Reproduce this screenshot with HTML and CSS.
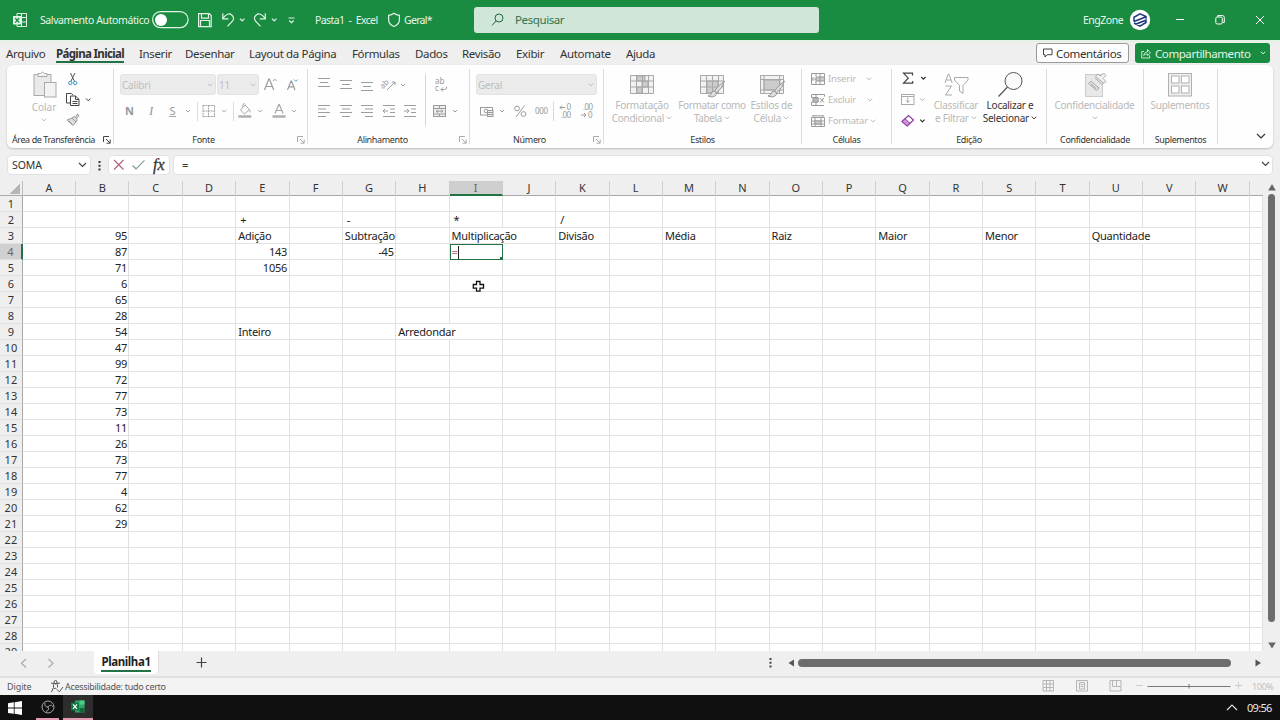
FILE: index.html
```html
<!DOCTYPE html>
<html lang="pt-BR">
<head>
<meta charset="utf-8">
<title>Pasta1 - Excel</title>
<link rel="stylesheet" href="styles.css">
</head>
<body>
<svg class="defs" width="0" height="0">
  <symbol id="chev" viewBox="0 0 6 4" overflow="visible"><path d="M.8 .7 3 2.9 5.2 .7" fill="none" stroke="currentColor" stroke-width="1"/></symbol>
  <symbol id="launch" viewBox="0 0 8 8"><path d="M.5 6V.5H6M3 3l4 4M7.2 3.5v3.7H3.5" fill="none" stroke="currentColor"/></symbol>
</svg>

<header class="titlebar">
  <svg class="app-icon" width="16" height="16" viewBox="12 12 16 16"><path d="M17 13.500h9.500v13h-9.500zM17 17.500h9.500M17 22h9.500M21.500 13.500v13" fill="none" stroke="#e4f3e8"/><rect x="13" y="16" width="8.500" height="8.500" fill="#e4f3e8"/><path d="m15.200 18 4 4.600m0-4.600-4 4.600" stroke="#188c40" stroke-width="1.300"/></svg>
  <span class="autosave">Salvamento Automático</span>
  <svg width="150" height="40" viewBox="150 0 150 40" fill="none" stroke="#e4f3e8" stroke-width="1.200">
    <rect x="152.600" y="11.600" width="35.500" height="16" rx="8"/><circle cx="161" cy="20" r="6" fill="#fff" stroke="none"/>
    <path d="M198.600 13.600h10.600l2 2v11h-12.600zM201.500 13.600v4.500h7v-4.500M200.500 27v-6.500h9V27"/>
    <path d="M222.800 13.200v5.600h5.600M223 18.400c3-4.600 6.500-5.500 9-3.200s1.700 4.800-.5 7l-4 4.200"/>
    <path d="m240 18.600 2.200 2.200 2.200-2.200M272 18.600l2.200 2.200 2.200-2.200M288.500 18h6M289.300 20.500l2.200 2.200 2.200-2.200"/>
    <path d="M265.300 13.200v5.600h-5.600M265 18.400c-3-4.600-6.500-5.500-9-3.200s-1.700 4.800.5 7l4 4.200"/>
  </svg>
  <span class="doc">Pasta1&nbsp; -&nbsp; Excel</span>
  <svg width="16" height="18" viewBox="386 11 16 18"><path d="M394 13.300c-2 1.500-3.600 1.800-5.400 2v4.200c0 3.500 2 5.700 5.400 7 3.400-1.300 5.400-3.500 5.400-7v-4.200c-1.800-.2-3.400-.5-5.400-2z" fill="none" stroke="#e4f3e8" stroke-width="1.200"/></svg>
  <span class="sens">Geral*</span>
  <div class="search"><svg width="14" height="14" viewBox="0 0 14 14"><circle cx="8" cy="5" r="4" fill="none" stroke="#1f6a3b"/><path d="M5 8 1 12.500" stroke="#1f6a3b"/></svg><span>Pesquisar</span></div>
  <span class="user">EngZone</span>
  <svg width="22" height="22" viewBox="1129 9 22 22"><circle cx="1140" cy="20" r="10.200" fill="#fff"/><path d="M1146 18.800v-2.300l-6-2.700-6 3.500v4.200M1134 21.500l11.500-4.500M1134 23l6 3.200 6-3.700v-2.300l-10.500 4" fill="none" stroke="#20387a" stroke-width="1.500"/></svg>
  <svg class="winbtns" width="100" height="20" viewBox="1170 10 100 20" fill="none" stroke="#fff"><path d="M1176 19.500h8"/><rect x="1215.800" y="17" width="6.500" height="7" rx="1.500"/><path d="M1217.800 17v-1.500h4.500q2 0 2 2v5h-1.500M1256 16l8 8m0-8-8 8"/></svg>
</header>

<nav class="tabs">
  <span>Arquivo</span><span class="active"><b>Página Inicial</b></span><span>Inserir</span><span>Desenhar</span><span>Layout da Página</span><span>Fórmulas</span><span>Dados</span><span>Revisão</span><span>Exibir</span><span>Automate</span><span>Ajuda</span>
  <div class="comments"><svg width="10" height="10" viewBox="0 0 10 10"><path d="M.5 1h8.500v5.700H4.200L2 9V6.700H.5z" fill="none" stroke="#444"/></svg>Comentários</div>
  <div class="share"><svg width="10" height="11" viewBox="0 0 10 11"><path d="M3 3.500H.7v6.500h8V7.500M2.700 7.500c.4-2.500 1.800-3.500 3.800-3.500V1.500L9.500 5 6.500 7.700V6C5 6 3.800 6.300 2.700 7.500z" fill="none" stroke="#d9efdf" stroke-width=".9"/></svg><span>Compartilhamento</span><svg class="sc" width="6" height="4"><use href="#chev"/></svg></div>
</nav>

<section class="ribbon">
  <div class="group g-clip">
    <div class="body">
      <div class="big off paste"><svg width="26" height="28" viewBox="32 71 26 28"><rect x="35" y="74.500" width="17" height="21" fill="#e9e9e9" stroke="#aaa"/><path d="M39 76.500v-3h2.500q2-3 4 0H48v3z" fill="#f4f4f4" stroke="#aaa"/><rect x="45.500" y="82.500" width="11.500" height="14.500" fill="#f3f3f3" stroke="#aaa"/></svg><span>Colar</span><svg width="6" height="4"><use href="#chev"/></svg></div>
      <svg width="32" height="66" viewBox="62 65 32 66" fill="none">
        <path d="M70.500 73l4 8.500M75 73l-4.200 8.500" stroke="#555"/><circle cx="70.300" cy="83" r="1.700" stroke="#3b94bd"/><circle cx="75.200" cy="83" r="1.700" stroke="#3b94bd"/>
        <path d="M70.500 103h-4V93.500h5l1.500 1.500M70.500 96h5l3.500 3.300v6.200h-8.500zM75.500 96v3.500H79M72.500 101.500h5M72.500 103.500h5" stroke="#444"/>
        <path d="m86 98.500 2.200 2.200 2.200-2.200" stroke="#333"/>
        <path d="m67 120 5-2 4 4-3 3.500zM72 118l2-1.500 1.500 1 2-3.500 1.700 1.600-3 2.800 1 1.600-1.200 2M69 121l3 3" stroke="#999" fill="#ddd"/>
      </svg>
    </div>
    <div class="label">Área de Transferência<svg width="8" height="8"><use href="#launch"/></svg></div>
  </div>

  <div class="group g-font">
    <div class="body col">
      <div class="selrow"><div class="sel s1">Calibri<svg width="6" height="4"><use href="#chev"/></svg></div><div class="sel s2">11<svg width="6" height="4"><use href="#chev"/></svg></div>
        <svg width="40" height="21" viewBox="262 74 40 21" fill="none"><path d="m264.500 90 4.300-11h.6l4.300 11M266 86.500h6.300M287.500 90l3.500-9h.5l3.500 9M289 86.800h4.700" stroke="#9a9a9a" stroke-width="1.200"/><path d="m273 81 1.800-1.800 1.800 1.800" stroke="#9a9a9a"/><path d="m294 79.500 1.800 1.800 1.800-1.800" stroke="#5f9fc0"/></svg></div>
      <svg width="194" height="35" viewBox="113 96 194 35" fill="none" stroke="#a6a6a6">
        <g class="biu"><text x="125" y="115" font-weight="700">N</text><text x="149" y="115" class="ital">I</text><text x="169.500" y="115">S</text></g>
        <path d="M169 116.500h7" />
        <path d="m186 110 2 2 2-2M222.300 110l2 2 2-2M258.300 110l2 2 2-2M292 110l2 2 2-2"/>
        <path d="M197.500 102v19M233.500 102v19" stroke="#ddd"/>
        <path d="M203 105.500h12M203 105v12M208.500 105v12M214.500 105v12M203 111h12M203 116.500h12" stroke-dasharray="2 .6"/>
        <path d="m240.500 110 4.500-5 4.500 4.500-5 4.500zM243 107v-2.500q1.500-2 2.500 0M249.500 109.500l.8 3"/>
        <path d="M238.300 116.500h13M272.500 116.500h13" stroke-width="2.600" stroke="#b0b0b0"/>
        <path d="m275 113.500 3.800-9h.5l3.800 9M276.500 110.500h5" stroke-width="1.200"/>
      </svg>
    </div>
    <div class="label">Fonte<svg class="dim" width="8" height="8"><use href="#launch"/></svg></div>
  </div>

  <div class="group g-align">
    <div class="body">
      <svg width="162" height="66" viewBox="307 65 162 66" fill="none" stroke="#9c9c9c">
        <path d="M318 78.500h12M320 82.500h8M318 86.500h12M340 80.500h12M342 84.500h8M340 88.500h12M361 82.500h12M363 86.500h8M361 90.500h12"/>
        <path d="M318 105.500h12M318 109h8M318 112.500h12M318 116.500h8M340 105.500h12M342 109h8M340 112.500h12M342 116.500h8M361 105.500h12M365 109h8M361 112.500h12M365 116.500h8"/>
        <path d="M383 105.500h12M390 109h5M390 112.500h5M383 116.500h12M388 111h-5m2-2-2 2 2 2M404 105.500h12M411 109h5M411 112.500h5M404 116.500h12M404 111h5m-2-2 2 2-2 2"/>
        <path d="m387 90 7.500-7.500m-2.500-.5h3v3M401 84l2 2 2-2M453 110l2 2 2-2"/>
        <path d="M425.500 74v52" stroke="#d8d8d8"/>
        <rect x="433.500" y="105.500" width="12" height="11" fill="#eee"/><path d="M433.500 108.500h12M433.500 114h12M439.500 105v3.500M439.500 114v3M436 111.200h7m-5-1.500-1.700 1.500 1.700 1.500m3.200-3 1.700 1.500-1.700 1.500"/>
        <path d="M441 89.500h3.500q2.200 0 2.200-3M443 87.500l-2 2 2 2"/>
        <g class="tiny"><text x="381" y="85" transform="rotate(-45 387 85)">ab</text><text x="435" y="84">ab</text><text x="435" y="91">c</text></g>
      </svg>
    </div>
    <div class="label">Alinhamento<svg class="dim" width="8" height="8"><use href="#launch"/></svg></div>
  </div>

  <div class="group g-num">
    <div class="body col">
      <div class="selrow"><div class="sel s3">Geral<svg width="6" height="4"><use href="#chev"/></svg></div></div>
      <svg width="134" height="35" viewBox="469 96 134 35" fill="none" stroke="#9c9c9c">
        <rect x="480.500" y="107.500" width="12" height="7.500"/><circle cx="486" cy="111" r="1.800"/><rect x="487.500" y="110.500" width="5.500" height="6" fill="#eee"/><path d="M487.500 112.500h5.500M487.500 114.500h5.500"/>
        <path d="m500 110 2 2 2-2"/><path d="M553.500 102v19" stroke="#d8d8d8"/>
        <circle cx="517" cy="108.500" r="2.400"/><circle cx="523.500" cy="114" r="2.400"/><path d="m524.500 105.500-8.500 11.500M560 107.500h5m-3-2-2 2 2 2M581 115h5m-2-2 2 2-2 2"/>
        <g class="tiny"><text x="535" y="114" textLength="13">000</text><text x="566.500" y="110">0</text><text x="561" y="118" textLength="10">.00</text><text x="583" y="110" textLength="10">.00</text><text x="588" y="118">0</text></g>
      </svg>
    </div>
    <div class="label">Número<svg class="dim" width="8" height="8"><use href="#launch"/></svg></div>
  </div>

  <div class="group g-styles">
    <div class="body">
      <div class="big off"><svg width="26" height="28" viewBox="0 0 26 28"><g fill="none" stroke="#a8a8a8"><path d="M1.500 4.500h23v18h-23z" fill="#f2f2f2"/><path d="M8 5h8v5H8zM8 16h5v6H8zM13 10h6v6h-6z" fill="#ccc"/><path d="M1.500 10h23M1.500 16h23M7.500 4.500v18M13.500 4.500v18M19.500 4.500v18"/></g></svg><span>Formatação<br>Condicional <svg width="6" height="4"><use href="#chev"/></svg></span></div>
      <div class="big off"><svg width="26" height="28" viewBox="0 0 26 28"><g fill="none" stroke="#a8a8a8"><path d="M1.500 4.500h23v18h-23z" fill="#f2f2f2"/><path d="M8 10h11v12H8z" fill="#ccc"/><path d="M1.500 10h23M1.500 16h23M7.500 4.500v18M13.500 4.500v18M19.500 4.500v18"/><path d="M25.500 10q-6 4-10 10l2 2q6-5 8-12zM15.500 20q-3 0-3.500 3-1 2-3 2 5 2 7 0 2-1.500 1.500-3z" fill="#ddd" stroke="#999"/></g></svg><span>Formatar como<br>Tabela <svg width="6" height="4"><use href="#chev"/></svg></span></div>
      <div class="big off"><svg width="26" height="28" viewBox="0 0 26 28"><g fill="none" stroke="#a8a8a8"><path d="M1.500 4.500h23v18h-23z" fill="#f2f2f2"/><path d="M5 9h16v10H5z" fill="#ccc"/><path d="M1.500 8.500h23M1.500 19h23M5 4.500v18M20.500 4.500v18"/><path d="M25.500 10q-6 4-10 10l2 2q6-5 8-12zM15.500 20q-3 0-3.500 3-1 2-3 2 5 2 7 0 2-1.500 1.500-3z" fill="#ddd" stroke="#999"/></g></svg><span>Estilos de<br>Célula <svg width="6" height="4"><use href="#chev"/></svg></span></div>
    </div>
    <div class="label">Estilos</div>
  </div>

  <div class="group g-cells">
    <div class="body col">
      <div class="small"><svg width="14" height="12" viewBox="0 0 14 12" fill="none" stroke="#9a9a9a"><path d="M.5.5h13v11H.5z"/><path d="M5 4h8.500v4H5z" fill="#ccc"/><path d="M9 .5v11M5 .5v3M5 8v3.500M0 6h5M2.500 4l-2 2 2 2"/></svg><span>Inserir</span><svg class="i1" width="6" height="4"><use href="#chev"/></svg></div>
      <div class="small"><svg width="14" height="12" viewBox="0 0 14 12" fill="none" stroke="#9a9a9a"><path d="M7 .5H.5V3.500H7V8H.5v3.500H13M5 .5v3M5 8v3.500M7 .5h6.500v2"/><path d="M2 4h5v4H2z" fill="#bbb"/><path d="m9 4 4 4.500m0-4.500L9 8.500"/></svg><span>Excluir</span><svg class="i2" width="6" height="4"><use href="#chev"/></svg></div>
      <div class="small"><svg width="14" height="12" viewBox="0 0 14 12" fill="none" stroke="#9a9a9a"><path d="M.5 2.500h13v9H.5zM.5 6h13M.5 9h13M4 2.500v9M10 2.500v9M2 0v2M12 0v2M2 .8h10"/><path d="M4 6h6v3H4z" fill="#ccc"/></svg><span>Formatar</span><svg class="i3" width="6" height="4"><use href="#chev"/></svg></div>
    </div>
    <div class="label">Células</div>
  </div>

  <div class="group g-edit">
    <div class="body">
      <svg width="31" height="66" viewBox="899 65 31 66" fill="none">
        <path d="M912.500 75.500v-2.300h-9l4.800 5-4.800 5h9.200v-2.300" stroke="#444" stroke-width="1.200"/><path d="m921.200 77 2.200 2.200 2.200-2.200M920.200 119.700l2.200 2.200 2.200-2.200" stroke="#333" stroke-width="1.200"/>
        <rect x="901.500" y="94.500" width="12.500" height="10" stroke="#aaa"/><path d="M901.500 96.500H914M907.800 97.500v5m-2-2 2 2 2-2M920.300 98.500l2 2 2-2" stroke="#aaa"/>
        <path d="m902 121.500 6.500-6 5 4.500-6.300 6z" stroke="#8a3d9c" fill="#fff" stroke-width="1.200"/><path d="m902 121.500 3-2.700 5 4.500-2.800 2.700z" fill="#cc91d8" stroke="#8a3d9c"/>
      </svg>
      <div class="big off sort"><svg width="28" height="28" viewBox="942 71 28 28" fill="none" stroke="#a8a8a8"><path d="m945 83 3.300-9h.6l3.300 9M946.300 80h4.800M945.500 86h6l-6 9h6.500M954.500 77.500h13.500v2.500l-5 5.500v8l-3.500-2.500v-5.500l-5-5.500z"/></svg><span>Classificar<br>e Filtrar <svg width="6" height="4"><use href="#chev"/></svg></span></div>
      <div class="big find"><svg width="28" height="28" viewBox="996 71 28 28"><circle cx="1013.500" cy="81" r="8.500" fill="#fafafa" stroke="#555"/><path d="m1007.500 87-9 9.500" stroke="#555" stroke-width="1.200"/></svg><span>Localizar e<br>Selecionar <svg width="6" height="4"><use href="#chev"/></svg></span></div>
    </div>
    <div class="label">Edição</div>
  </div>

  <div class="group g-conf">
    <div class="body"><div class="big off"><svg width="26" height="28" viewBox="1083 71 26 28" fill="none" stroke="#aaa"><rect x="1086.500" y="74.500" width="17" height="22" fill="#e8e8e8" stroke="#ccc"/><path d="m1092 81 8 7-2.500 2.500-8-7z" fill="#ddd"/><path d="m1096.500 76.500 8.500 7 2-2-3-3 3-3-2.500-2.500-3 3-3-2z" fill="#f0f0f0"/><path d="m1096 78 7 6.500M1092 84l5 4.500"/></svg><span>Confidencialidade</span><svg width="6" height="4"><use href="#chev"/></svg></div></div>
    <div class="label">Confidencialidade</div>
  </div>
  <div class="group g-supl">
    <div class="body"><div class="big off"><svg width="26" height="28" viewBox="1167 71 26 28" fill="#fff" stroke="#b0b0b0"><rect x="1168.500" y="73.500" width="23" height="22.500" fill="#f0f0f0"/><rect x="1171.500" y="76" width="7.500" height="7"/><rect x="1181.500" y="76" width="7.500" height="7"/><rect x="1171.500" y="86" width="7.500" height="7"/><rect x="1181.500" y="86" width="7.500" height="7"/></svg><span>Suplementos</span></div></div>
    <div class="label">Suplementos</div>
  </div>
  <svg class="collapse" width="10" height="6" viewBox="0 0 10 6"><path d="m1 1 4 4 4-4" fill="none" stroke="#333" stroke-width="1.200"/></svg>
</section>

<section class="fbar">
  <div class="namebox">SOMA<svg width="9" height="6" viewBox="0 0 9 6"><path d="m1 1 3.500 3.500L8 1" fill="none" stroke="#444" stroke-width="1.200"/></svg></div>
  <svg class="dots" width="3" height="11" viewBox="0 0 3 11" fill="#333"><path d="M.5 1h2v2h-2zM.5 4.800h2v2h-2zM.5 8.500h2v2h-2z"/></svg>
  <div class="fxbox"><svg width="36" height="16" viewBox="111 157 36 16" fill="none"><path d="m114 160 9.500 9.500m0-9.500-9.500 9.500" stroke="#b5607c" stroke-width="1.200"/><path d="m132.500 165.500 3.500 3.300 8.500-8.500" stroke="#84a094" stroke-width="1.200"/></svg><i>fx</i></div>
  <div class="formula"><span>=</span><svg width="9" height="6" viewBox="0 0 9 6"><path d="m1 1 3.500 3.500L8 1" fill="none" stroke="#444" stroke-width="1.200"/></svg></div>
</section>

<main class="sheet">
  <div class="grid-area">
    <div class="colhead" id="cols"><div class="corner"></div></div>
    <div class="rows" id="rows"></div>
    <svg class="pointer" width="13" height="13" viewBox="0 0 13 13"><path d="M4.500 1.500h3.500v3h3.500v3.700H8v3H4.500v-3H1.300V4.500h3.200z" fill="#fff" stroke="#111" stroke-width="1.300"/></svg>
  </div>
  <div class="vscroll"><svg width="8" height="7"><path d="M4 0 7.800 6.500H.2z" fill="#666"/></svg><div class="thumb"></div><svg class="down" width="8" height="7"><path d="M4 6.500 7.800 .5H.2z" fill="#666"/></svg></div>
</main>

<section class="sheetbar">
  <svg width="40" height="12" viewBox="18 656 40 12" fill="none" stroke="#aaa" stroke-width="1.200"><path d="m26 658-4.500 4.200 4.500 4.300M48.500 658l4.500 4.200-4.500 4.300"/></svg>
  <div class="sheettab"><b>Planilha1</b></div>
  <svg class="plus" width="11" height="11" viewBox="0 0 11 11"><path d="M5.500 .5v10M.5 5.500h10" stroke="#444" stroke-width="1.200"/></svg>
  <svg class="dots2" width="3" height="10" viewBox="0 0 3 10" fill="#444"><path d="M.5 0h2v2h-2zM.5 3.700h2v2h-2zM.5 7.400h2v2h-2z"/></svg>
  <svg width="7" height="8"><path d="M6 .5v7L.5 4z" fill="#555"/></svg>
  <div class="hthumb"></div>
  <svg class="hright" width="7" height="8"><path d="M.5 .5v7L6 4z" fill="#555"/></svg>
</section>

<section class="status">
  <span class="mode">Digite</span>
  <svg width="14" height="13" viewBox="0 0 14 13" fill="none" stroke="#555"><circle cx="5.500" cy="2" r="1.500"/><path d="M1 3q4.500 2 9 0M3.500 4.500v3L1.500 12M4 9q1-2 2.500 0M7.500 4.500v3M7 9.500l2.300 2.300L13 7"/></svg>
  <span class="acc">Acessibilidade: tudo certo</span>
  <svg width="205" height="16" viewBox="1040 678 205 16" fill="none" stroke="#b5b5b5"><path d="M1043 680.500h10.500v10.500H1043zM1043 684h10.500M1043 687.500h10.500M1046.500 680.500v10.500M1050 680.500v10.500M1076.500 680.500h11v10.500h-11zM1079.500 682.500h5v6.500h-5zM1080.500 684.500h3M1080.500 686.500h3M1110 680.500h11v10.500h-11zM1112.500 680.500v6h4v-6M1116.500 686.500h4"/><path d="M1136 685.500h7M1235 685.500h7M1238.500 682v7" stroke="#ccc"/><path d="M1147.500 686.500h83M1189 684v4.500" stroke="#777"/></svg>
  <span class="zoom">100%</span>
</section>

<footer class="taskbar">
  <svg class="win" width="14" height="14" viewBox="0 0 14 14" fill="#fff"><path d="M0 2.200 5.800 1.300v5.300H0zM6.600 1.200 14 0v6.600H6.600zM0 7.400h5.800v5.300L0 11.900zM6.600 7.400H14V14l-7.400-1.200z"/></svg>
  <div class="task obs"><svg width="14" height="14" viewBox="0 0 14 14" fill="none" stroke="#aaa"><circle cx="7" cy="7" r="6"/><path d="M7 7C4 7 3.500 5 4.200 3M7 7c1.500-2.500 4-2 4.800-.3M7 7c1.300 2.500 0 4-2 4.200"/></svg></div>
  <div class="task xl"><svg width="14" height="13" viewBox="0 0 14 13"><path d="M4 .5h9.500v12H4z" fill="#2fa766"/><path d="M8.500 .5h5v4h-5z" fill="#4ccc85"/><path d="M8.500 8h5v4.500h-5z" fill="#17663b"/><rect y="2.500" width="8" height="8" fill="#0f7a40"/><path d="m2 4.300 4 4.500m0-4.500L2 8.800" stroke="#fff" stroke-width="1.200"/></svg></div>
  <svg class="tray" width="12" height="7" viewBox="0 0 12 7"><path d="m1 6 5-5 5 5" fill="none" stroke="#ddd" stroke-width="1.200"/></svg>
  <span class="clock">09:56</span>
</footer>
<script src="sheet.js"></script>
</body>
</html>
```
FILE: styles.css
```css
* { box-sizing: border-box; }
body { margin: 0; width: 1280px; height: 720px; overflow: hidden; display: flex; flex-direction: column; background: #efefef; color: #333; font-family: "Noto Sans", "Open Sans", sans-serif; font-size: 11px; }
svg { display: block; flex: none; }
.defs { position: absolute; }

.titlebar { height: 40px; flex: none; display: flex; align-items: center; background: #198c41; color: #e9f6ec; padding-left: 12px; white-space: nowrap; font-size: 10.5px; }
.autosave { width: 110px; margin-left: 12px; letter-spacing: -.4px; }
.doc { width: 71px; margin-left: 15px; letter-spacing: -.6px; }
.sens { width: 70px; margin-left: 2px; letter-spacing: -.7px; }
.search { width: 345px; height: 26px; border-radius: 3px; background: #d0e6d9; color: #34724b; display: flex; align-items: center; padding-left: 17px; gap: 10px; font-size: 11.5px; letter-spacing: -.4px; padding-bottom: 1px; }
.user { width: 46px; margin-left: 264px; letter-spacing: -.5px; }
.winbtns { margin-left: 19px; }

.tabs { height: 25px; flex: none; display: grid; grid-template-columns: 50px 83px 46px 64px 103px 63px 47px 54px 44px 66px 410px 99px 135px; padding-left: 6px; border-top: 2px solid #e5f2e8; font-size: 11.5px; letter-spacing: -.35px; white-space: nowrap; }
.tabs > span { height: 22px; line-height: 23px; }
.tabs .active b { display: inline-block; height: 21px; border-bottom: 2px solid #217346; letter-spacing: -.65px; }
.comments, .share { height: 20px; display: flex; align-items: center; border-radius: 3px; }
.comments { width: 93px; margin-top: 1px; border: 1px solid #9a9a9a; background: #fdfdfd; padding-left: 6px; gap: 3px; }
.share { margin-top: 1px; background: #198c41; color: #e6f5ea; padding-left: 6px; gap: 4px; letter-spacing: -.42px; }
.share .sc { margin-left: auto; margin-right: 4px; }

.ribbon { height: 83px; flex: none; margin: 0 7px; background: #fefefe; border-radius: 6px; box-shadow: 0 1px 2px #bbb; display: flex; }
.group { position: relative; display: flex; flex-direction: column; border-right: 1px solid #dcdcdc; height: 75px; margin-top: 4px; }
.body { height: 66px; margin-top: -4px; margin-left: -1px; display: flex; flex: none; }
.body.col { flex-direction: column; }
.g-clip .body { margin-left: 0; }
.label { height: 13px; line-height: 18px; text-align: center; font-size: 9px; letter-spacing: -.35px; color: #333; white-space: nowrap; }
.label svg { position: absolute; right: 2px; bottom: 0; color: #444; }
.label .dim { color: #aaa; }
.g-clip { width: 107px; } .g-clip .label { text-align: left; padding-left: 5px; letter-spacing: -.42px; }
.g-font { width: 194px; } .g-font .label { padding-right: 14px; }
.g-align { width: 162px; } .g-align .label { padding-right: 12px; }
.g-num { width: 134px; } .g-num .label { padding-right: 14px; }
.g-styles { width: 198px; }
.g-cells { width: 90px; }
.g-edit { width: 155px; }
.g-conf { width: 97px; }
.g-supl { width: 74px; }
.big { display: flex; flex-direction: column; align-items: center; text-align: center; padding-top: 6px; line-height: 13px; font-size: 10px; letter-spacing: -.25px; white-space: nowrap; color: #333; }
.big span { display: block; }
.big span svg { display: inline-block; vertical-align: 2px; }
.big > svg:last-child { margin-top: 4px; }
.off { color: #b9b9b9; }
.paste { width: 36px; margin-left: 19px; padding-top: 6px; }
.paste span { margin-top: 2px; letter-spacing: 0; }
.selrow { display: flex; height: 31px; padding: 9px 0 0 7px; }
.sel { height: 21px; background: #ebebeb; border: 1px solid #e2e2e2; border-radius: 3px; color: #bdbdbd; display: flex; justify-content: space-between; align-items: center; padding: 0 2px 0 1px; font-size: 10px; letter-spacing: -.2px; }
.s1 { width: 96px; } .s2 { width: 42px; margin: 0 3px 0 1px; } .s3 { width: 121px; margin-left: 0; }
.biu text { font: 11px "Noto Sans", sans-serif; fill: #999; stroke: none; }
.biu text[font-weight] { font-weight: 700; }
.biu .ital { font-family: "Liberation Serif", serif; font-style: italic; font-size: 13px; }
.tiny text { font: 8px "Noto Sans", sans-serif; fill: #999; stroke: none; }
.g-styles .big:nth-child(1) { width: 78px; }
.g-styles .big:nth-child(2) { width: 62px; letter-spacing: -.4px; }
.g-styles .big:nth-child(3) { width: 57px; }
.g-cells .body { padding: 3px 0 0 10px; }
.small { height: 21.300px; display: flex; align-items: center; gap: 3px; color: #b9b9b9; font-size: 9.5px; letter-spacing: -.2px; }
.i1 { margin-left: 7px; } .i2 { margin-left: 8px; } .i3 { margin-left: -1px; }
.g-edit .body { padding-left: 8px; }
.sort { width: 52px; } .find { width: 56px; }
.g-conf .big { width: 97px; } .g-supl .big { width: 74px; }
.collapse { margin: 68px 0 0 38px; }

.fbar { height: 33px; flex: none; padding: 7px 0 0 7px; display: flex; }
.namebox, .fxbox, .formula { height: 20px; background: #fff; border: 1px solid #e2e2e2; border-radius: 4px; display: flex; align-items: center; }
.namebox { width: 84px; padding: 0 3px 0 4px; justify-content: space-between; font-size: 10.5px; letter-spacing: -.1px; }
.dots { margin: 5px 7px 0 7px; }
.fxbox { width: 62px; padding-left: 2px; gap: 6px; }
.fxbox i { font: italic 400 16px "Liberation Serif", serif; line-height: 16px; -webkit-text-stroke: .3px #333; }
.formula { width: 1100px; margin-left: 3px; padding: 0 2px 2px 8px; justify-content: space-between; }

.sheet { height: 470px; flex: none; display: flex; overflow: hidden; }
.grid-area { position: relative; width: 1264px; height: 470px; overflow: hidden; }
.colhead { display: grid; grid-template-columns: 22.800px repeat(23, 53.350px) 1fr; height: 15px; border-bottom: 1px solid #a9a9a9; text-align: center; line-height: 14px; font-size: 11px; width: 1263px; }
.colhead > div { border-right: 1px solid #cfcfcf; height: 15px; }
.colhead > .corner { border-right-color: #bbb; background: linear-gradient(135deg, transparent 50%, #b5b5b5 50%) 9px 2px / 11px 11px no-repeat; }
.colhead > div:last-child { border: 0; }
.colhead > .on { background: #cfcfcf; border-bottom: 2px solid #217346; color: #666; }
.row { display: grid; grid-template-columns: 22.800px repeat(23, 53.350px) 1fr; height: 16px; background: #fff; line-height: 15px; width: 1263px; }
.row > div { border-right: 1px solid #e1e1e1; border-bottom: 1px solid #e1e1e1; white-space: nowrap; padding: 0 1.500px 0 2px; height: 16px; color: #222; letter-spacing: -.25px; }
.row > .rh { background: #efefef; text-align: center; padding: 0; border-right-color: #a9a9a9; font-size: 11px; color: #333; letter-spacing: 0; line-height: 16px; }
.row > .rh.on { background: #d0d0d0; border-right: 2px solid #217346; color: #666; }
.row > div.n { text-align: right; }
.row > div.op { padding-left: 4px; }
.row > div.spill { border-right-color: transparent; }
.row > div.edit { outline: 1.500px solid #217346; outline-offset: -1px; position: relative; color: #a77; }
.caret { display: inline-block; width: 1px; height: 13px; background: #222; vertical-align: -3px; }
.edit::after { content: ""; position: absolute; right: -1px; bottom: -1px; width: 3px; height: 3px; background: #217346; }
.pointer { position: absolute; left: 472px; top: 99px; }
.vscroll { width: 16px; padding: 3px 0 0 4px; }
.thumb { width: 7px; height: 428px; background: #6d6d6d; border-radius: 4px; margin-top: 3px; }
.down { margin-top: 20px; }

.sheetbar { height: 27px; flex: none; display: flex; align-items: center; padding: 0 0 2px 18px; border-bottom: 2px solid #e0e0e0; }
.sheettab { width: 65px; height: 23px; align-self: flex-start; margin-left: 36px; background: #fff; border-radius: 0 0 4px 4px; border-right: 1px solid #ddd; text-align: center; }
.sheettab b { display: inline-block; height: 21px; line-height: 21px; border-bottom: 2px solid #217346; font-size: 11.5px; letter-spacing: -.4px; color: #222; }
.plus { margin-left: 37px; }
.dots2 { margin: 0 16px 0 562px; }
.hthumb { width: 433px; height: 8px; background: #6d6d6d; border-radius: 4px; margin-left: 3px; }
.hright { margin-left: 24px; }

.status { height: 17px; flex: none; display: flex; align-items: center; background: #f3f3f3; padding-left: 7px; font-size: 9px; letter-spacing: -.3px; color: #555; white-space: nowrap; padding-bottom: 1px; }
.mode { width: 43px; letter-spacing: -.1px; }
.acc { margin-left: 1px; width: 975px; }
.zoom { color: #c0c0c0; margin-left: 7px; }

.taskbar { height: 25px; flex: none; background: #101010; display: flex; align-items: center; color: #e8e8e8; }
.win { margin: 0 14px 0 8px; }
.task { height: 25px; display: flex; align-items: center; justify-content: center; border-bottom: 2px solid #e39aae; }
.obs { width: 23px; } .xl { width: 30px; background: #2d2d2d; margin-left: 4px; }
.tray { margin-left: 1133px; }
.clock { margin-left: 9px; letter-spacing: -.7px; }
```
FILE: sheet.js
```js
const letters = "ABCDEFGHIJKLMNOPQRSTUVW";
const columnB = [95, 87, 71, 6, 65, 28, 54, 47, 99, 72, 77, 73, 11, 26, 73, 77, 4, 62, 29];
const cells = {
  E2: "+", G2: "-", I2: "*", K2: "/",
  E3: "Adição", G3: "Subtração", I3: "Multiplicação", K3: "Divisão", M3: "Média", O3: "Raiz",
  Q3: "Maior", S3: "Menor", U3: "Quantidade",
  E4: 143, E5: 1056, G4: -45, E9: "Inteiro", H9: "Arredondar"
};
columnB.forEach((value, i) => { cells["B" + (i + 3)] = value; });

function add(parent, className, text) {
  const el = document.createElement("div");
  el.className = className;
  el.textContent = text;
  parent.append(el);
  return el;
}

const head = document.getElementById("cols");
for (const letter of letters) add(head, letter === "I" ? "on" : "", letter);
add(head, "", "");

const spilling = ["I3", "U3", "H9"];
const rows = document.getElementById("rows");
for (let r = 1; r <= 29; r++) {
  const row = add(rows, "row", "");
  add(row, r === 4 ? "rh on" : "rh", r);
  for (const letter of letters) {
    const key = letter + r;
    const value = cells[key] ?? "";
    let className = typeof value === "number" ? "n" : r === 2 ? "op" : "";
    if (spilling.includes(key)) className += " spill";
    const cell = add(row, className, value);
    if (key === "I4") {
      cell.className = "edit";
      cell.textContent = "=";
      const caret = document.createElement("span");
      caret.className = "caret";
      cell.append(caret);
    }
  }
  add(row, "", "");
}
```
